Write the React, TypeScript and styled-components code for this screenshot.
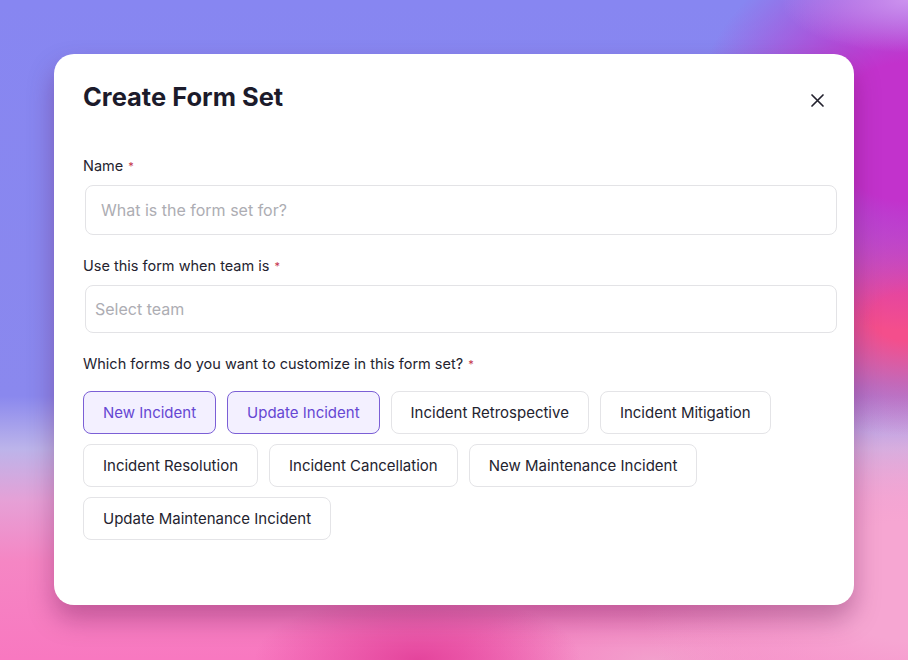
import React from 'react'
import styled, { createGlobalStyle } from 'styled-components'

const GlobalStyle = createGlobalStyle`
  html, body {
    margin: 0;
    padding: 0;
  }
  body {
    font-family: Inter, "Noto Sans", sans-serif;
    -webkit-font-smoothing: antialiased;
  }
`

const Backdrop = styled.div`
  width: 908px;
  height: 660px;
  box-sizing: border-box;
  padding: 54px;
  overflow: hidden;
  background:
    radial-gradient(ellipse 14% 8% at 100% 0%, #cc92ee 0%, rgba(204, 146, 238, 0) 100%),
    radial-gradient(ellipse 24% 30% at 100% 20%, #c232cc 0%, #c232cc 35%, rgba(194, 50, 204, 0) 100%),
    radial-gradient(ellipse 20% 18% at 100% 48%, #f44e8c 0%, #f44e8c 20%, rgba(244, 78, 140, 0) 100%),
    radial-gradient(ellipse 30% 30% at 100% 88%, #f6a6d2 0%, #f6a6d2 30%, rgba(246, 166, 210, 0) 100%),
    radial-gradient(ellipse 18% 10% at 46% 100%, #e4449c 0%, rgba(228, 68, 156, 0) 100%),
    radial-gradient(ellipse 22% 10% at 72% 100%, #f2a0cc 0%, rgba(242, 160, 204, 0) 100%),
    linear-gradient(180deg, #8786f1 0%, #8a88ee 60%, #bcb4ea 68%, #e6a0d6 76%, #f586c4 85%, #f878c0 100%);
`

const Modal = styled.div`
  width: 800px;
  height: 551px;
  box-sizing: border-box;
  background: #ffffff;
  border-radius: 20px;
  box-shadow: 0 14px 26px rgba(90, 10, 70, 0.34);
  padding: 26px 17px 0 29px;
  display: flex;
  flex-direction: column;
`

const Header = styled.div`
  display: flex;
  justify-content: space-between;
  align-items: center;
  margin-bottom: 42px;
`

const Title = styled.h2`
  margin: 0;
  font-size: 25.5px;
  line-height: 34px;
  font-weight: 700;
  color: #1c1b2b;
`

const CloseButton = styled.button`
  border: none;
  background: none;
  padding: 0;
  margin: 6px 12px 0 0;
  width: 16px;
  height: 16px;
  display: flex;
  align-items: center;
  justify-content: center;
  color: #23222e;
  cursor: pointer;
`

const Field = styled.div`
  display: flex;
  flex-direction: column;
  margin-bottom: 21px;
`

const Label = styled.label`
  font-size: 14.5px;
  line-height: 20px;
  color: #24232f;
  margin-bottom: 9px;
`

const Required = styled.span`
  color: #c4314b;
  font-size: 11px;
  vertical-align: top;
  margin-left: 5px;
`

const TextInput = styled.input<{ $h: number; $pad: number }>`
  box-sizing: border-box;
  margin-left: 2px;
  width: 752px;
  height: ${p => p.$h}px;
  border: 1px solid #e3e3e6;
  border-radius: 8px;
  padding: 0 ${p => p.$pad}px;
  font-family: inherit;
  font-size: 16px;
  color: #24232f;
  outline: none;
  &::placeholder {
    color: #adadb3;
  }
`

const Chips = styled.div`
  display: flex;
  flex-wrap: wrap;
  column-gap: 11px;
  row-gap: 10px;
  width: 720px;
  margin-top: 8px;
`

const Chip = styled.button<{ $active?: boolean }>`
  box-sizing: border-box;
  height: 43px;
  padding: 0 19px;
  border-radius: 8px;
  font-family: inherit;
  font-size: 15px;
  background: ${p => (p.$active ? '#f3f0ff' : '#ffffff')};
  border: ${p => (p.$active ? '1.5px solid #7b5fd6' : '1px solid #e4e4e7')};
  color: ${p => (p.$active ? '#6647d3' : '#24232f')};
  cursor: pointer;
`

const forms = [
  { name: 'New Incident', active: true },
  { name: 'Update Incident', active: true },
  { name: 'Incident Retrospective' },
  { name: 'Incident Mitigation' },
  { name: 'Incident Resolution' },
  { name: 'Incident Cancellation' },
  { name: 'New Maintenance Incident' },
  { name: 'Update Maintenance Incident' },
]

export default function App() {
  return (
    <>
      <GlobalStyle />
      <Backdrop>
        <Modal>
          <Header>
            <Title>Create Form Set</Title>
            <CloseButton aria-label="Close">
              <svg width="15" height="15" viewBox="0 0 15 15" fill="none">
                <path d="M2 2L13 13M13 2L2 13" stroke="currentColor" strokeWidth="1.7" strokeLinecap="round" />
              </svg>
            </CloseButton>
          </Header>

          <Field>
            <Label>
              Name<Required>*</Required>
            </Label>
            <TextInput $h={50} $pad={15} placeholder="What is the form set for?" />
          </Field>

          <Field>
            <Label>
              Use this form when team is<Required>*</Required>
            </Label>
            <TextInput $h={48} $pad={9} placeholder="Select team" />
          </Field>

          <Field>
            <Label>
              Which forms do you want to customize in this form set?<Required>*</Required>
            </Label>
            <Chips>
              {forms.map(f => (
                <Chip key={f.name} $active={f.active}>
                  {f.name}
                </Chip>
              ))}
            </Chips>
          </Field>
        </Modal>
      </Backdrop>
    </>
  )
}
